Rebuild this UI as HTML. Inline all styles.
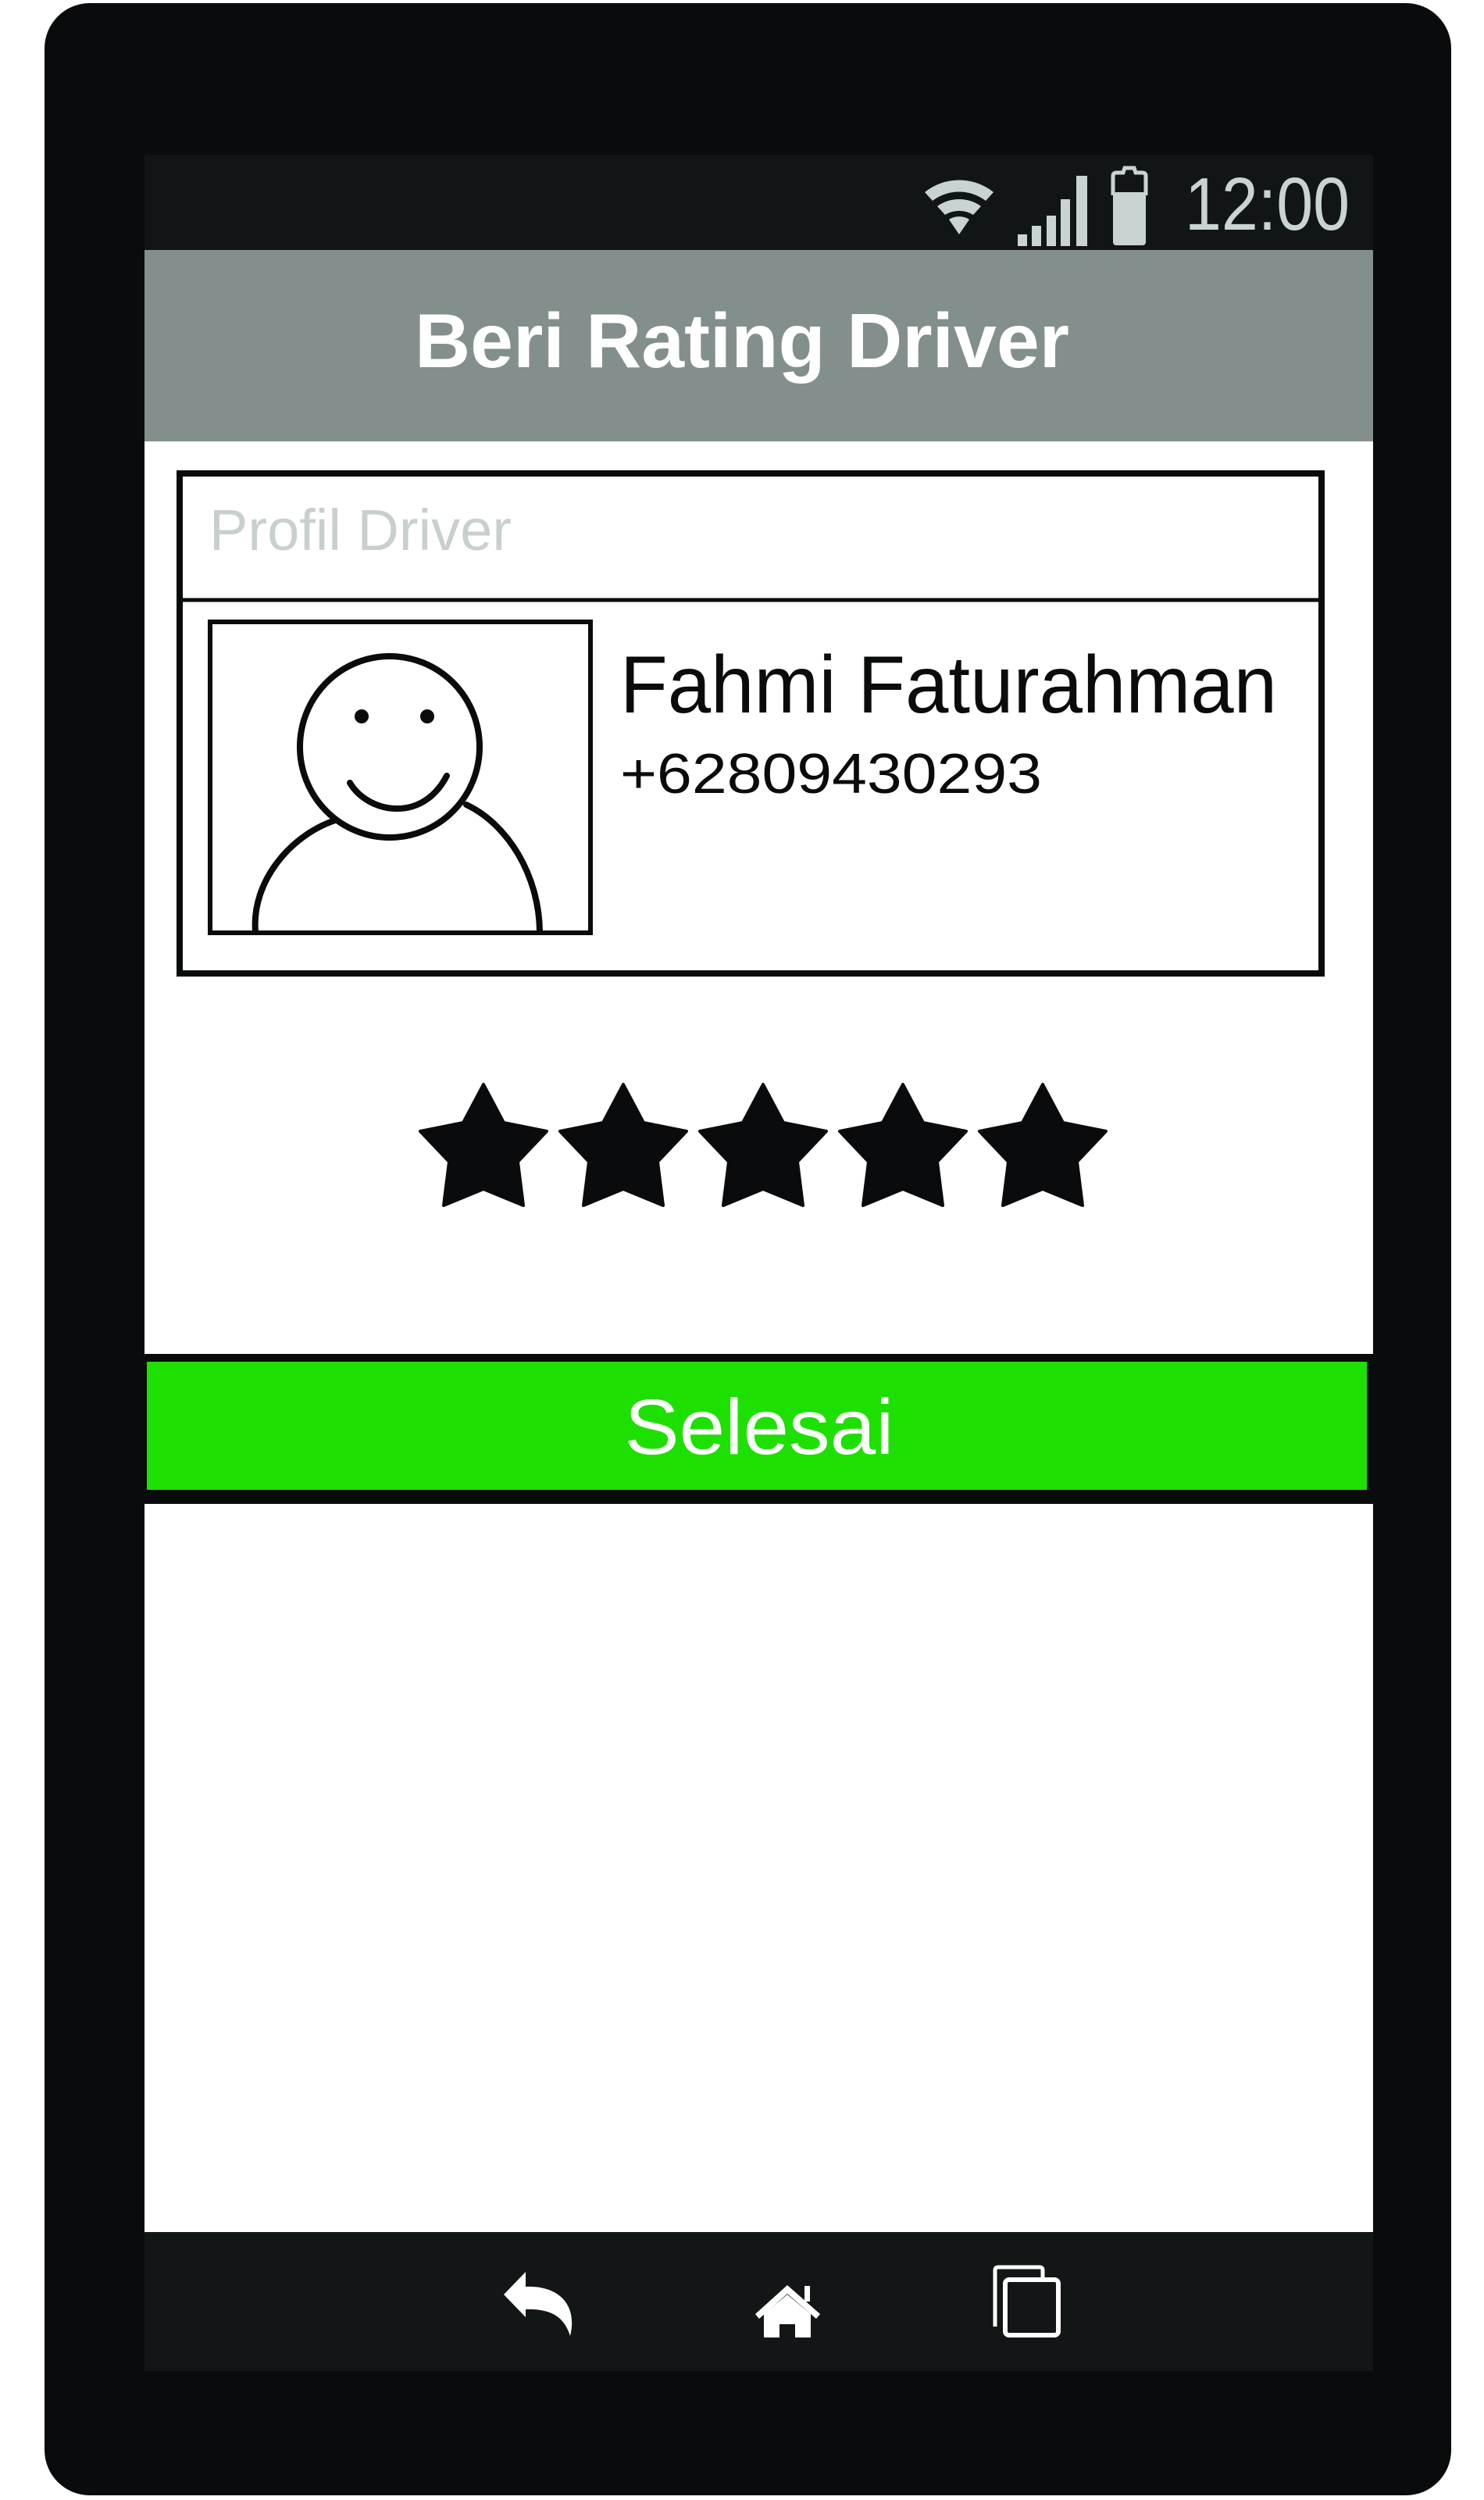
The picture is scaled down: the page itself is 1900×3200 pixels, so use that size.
<!DOCTYPE html>
<html><head><meta charset="utf-8"><style>html,body{margin:0;padding:0;background:#fff;width:1900px;height:3200px;overflow:hidden}svg{display:block}</style></head>
<body>
<svg width="1900" height="3200" viewBox="0 0 1900 3200" xmlns="http://www.w3.org/2000/svg" font-family="Liberation Sans, sans-serif">
<rect width="1900" height="3200" fill="#fff"/>
<rect x="57" y="4" width="1801" height="3190" rx="58" fill="#0a0b0c"/>
<!-- status bar -->
<rect x="185" y="198" width="1573" height="122" fill="#121516"/>
<g fill="#c9d4d2">
<path d="M1184,246 A70,70 0 0 1 1272,246 L1262,257 A56,56 0 0 0 1194,257 Z"/>
<path d="M1200,264 A48,48 0 0 1 1256,264 L1246,275 A34,34 0 0 0 1210,275 Z"/>
<path d="M1215,281 A24,24 0 0 1 1241,281 L1228,300 Z"/>
<rect x="1303" y="300" width="12" height="15"/>
<rect x="1321" y="289" width="12" height="26"/>
<rect x="1340" y="276" width="12" height="39"/>
<rect x="1358" y="255" width="12" height="60"/>
<rect x="1378" y="225" width="14" height="90"/>
<rect x="1425" y="246" width="42" height="68" rx="4"/>
</g>
<path d="M1425,250 L1425,225 Q1425,221 1430,221 L1438,221 L1440,215 L1452,215 L1454,221 L1462,221 Q1467,221 1467,225 L1467,250" fill="none" stroke="#c9d4d2" stroke-width="5"/>
<text x="1517" y="294" font-size="96" fill="#c9d4d2" textLength="211" lengthAdjust="spacingAndGlyphs">12:00</text>
<!-- app bar -->
<rect x="185" y="320" width="1573" height="245" fill="#838f8c"/>
<text x="950" y="470" font-size="98" font-weight="bold" fill="#fff" text-anchor="middle" textLength="838" lengthAdjust="spacingAndGlyphs">Beri Rating Driver</text>
<!-- content -->
<rect x="185" y="565" width="1573" height="2292" fill="#fff"/>
<!-- card -->
<rect x="230" y="606" width="1462" height="640" fill="none" stroke="#0a0b0c" stroke-width="8"/>
<line x1="230" y1="768" x2="1692" y2="768" stroke="#0a0b0c" stroke-width="5"/>
<text x="268" y="704" font-size="74" fill="#c8d0ce" textLength="387" lengthAdjust="spacingAndGlyphs">Profil Driver</text>
<rect x="269" y="796" width="487" height="398" fill="none" stroke="#0a0b0c" stroke-width="6"/>
<g fill="none" stroke="#0a0b0c" stroke-width="8" stroke-linecap="round">
<path d="M327,1192 C322,1130 370,1070 429,1050"/>
<path d="M597,1030 C650,1055 690,1120 691,1192"/>
<ellipse cx="499" cy="956" rx="115" ry="116"/>
<path d="M448,1002 C470,1040 540,1055 572,993"/>
</g>
<circle cx="463" cy="917" r="9" fill="#0a0b0c"/>
<circle cx="547" cy="917" r="9" fill="#0a0b0c"/>
<text x="794" y="912" font-size="104" fill="#0a0b0c" textLength="841" lengthAdjust="spacingAndGlyphs">Fahmi Faturahman</text>
<text x="794" y="1015" font-size="72" fill="#0a0b0c" textLength="540" lengthAdjust="spacingAndGlyphs">+62809430293</text>
<!-- stars -->
<defs><path id="st" d="M0,0 L26,49 L81,60 L44,99 L51,155 L0,134 L-51,155 L-44,99 L-81,60 L-26,49 Z" fill="#0a0b0c" stroke="#0a0b0c" stroke-width="4" stroke-linejoin="round"/></defs>
<use href="#st" x="619" y="1388"/>
<use href="#st" x="798" y="1388"/>
<use href="#st" x="977" y="1388"/>
<use href="#st" x="1156" y="1388"/>
<use href="#st" x="1335" y="1388"/>
<!-- button -->
<rect x="185" y="1733" width="1573" height="192" fill="#0a0b0c"/>
<rect x="188" y="1743" width="1562" height="164" fill="#1ee000"/>
<text x="972" y="1861" font-size="100" fill="#fff" text-anchor="middle" textLength="345" lengthAdjust="spacingAndGlyphs">Selesai</text>
<rect x="185" y="1925" width="1573" height="932" fill="#fff"/>
<!-- nav bar -->
<rect x="185" y="2857" width="1573" height="178" fill="#131616"/>
<path d="M645,2937 L673,2908 L673,2927 C715,2925 740,2950 730,2990 C722,2965 705,2955 673,2956 L673,2966 Z" fill="#fff"/>
<path d="M967,2962 L1008,2925 L1050,2962 L1045,2968 L1008,2936 L972,2968 Z" fill="#fff"/>
<path d="M978,2962 L1008,2937 L1038,2962 L1038,2992 L1018,2992 L1018,2975 L998,2975 L998,2992 L978,2992 Z" fill="#fff"/>
<rect x="1030" y="2926" width="7" height="20" fill="#fff"/>
<path d="M1274,2978 L1274,2906 Q1274,2902 1278,2902 L1331,2902 Q1335,2902 1335,2906 L1335,2915" fill="none" stroke="#fff" stroke-width="5"/>
<rect x="1287" y="2918" width="68" height="71" rx="5" fill="none" stroke="#fff" stroke-width="6"/>
</svg>
</body></html>
